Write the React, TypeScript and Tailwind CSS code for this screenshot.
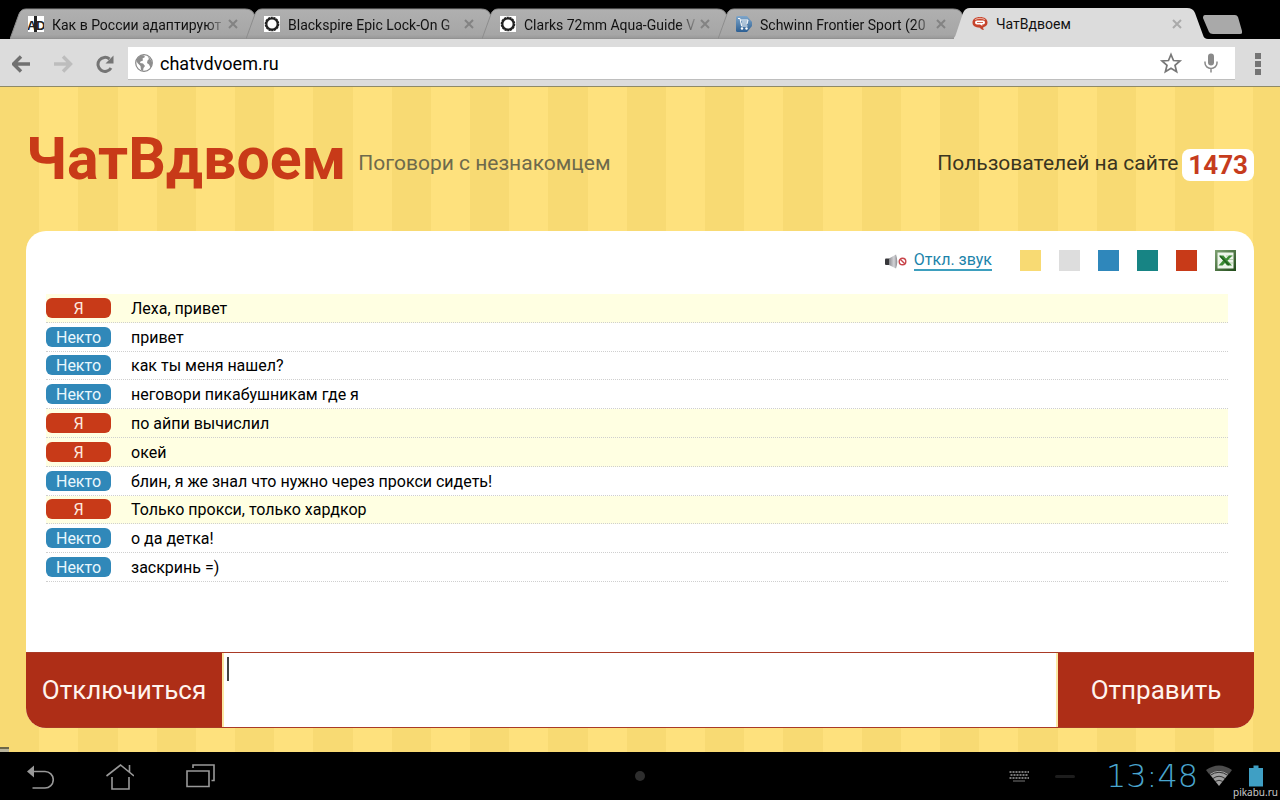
import React, { useState } from "react";
import { clsx } from "clsx";

interface TabInfo {
  id: string;
  title: string;
  icon: React.ReactNode;
}

interface Message {
  mine: boolean;
  text: string;
}

const MESSAGES: Message[] = [
  { mine: true,  text: "Леха, привет" },
  { mine: false, text: "привет" },
  { mine: false, text: "как ты меня нашел?" },
  { mine: false, text: "неговори пикабушникам где я" },
  { mine: true,  text: "по айпи вычислил" },
  { mine: true,  text: "окей" },
  { mine: false, text: "блин, я же знал что нужно через прокси сидеть!" },
  { mine: true,  text: "Только прокси, только хардкор" },
  { mine: false, text: "о да детка!" },
  { mine: false, text: "заскринь =)" },
];

const THEMES = [
  { name: "Жёлтая",  color: "bg-[#f8da73]" },
  { name: "Серая",   color: "bg-[#dddddd]" },
  { name: "Синяя",   color: "bg-[#2f87bb]" },
  { name: "Зелёная", color: "bg-[#178484]" },
  { name: "Красная", color: "bg-[#c83a18]" },
];

/* ---------- favicons ---------- */

const AdIcon = () => (
  <svg viewBox="0 0 16 16" className="h-4 w-4">
    <rect width="16" height="16" fill="#fff" />
    <rect x="6" width="3" height="16" fill="#222" />
    <text x="-1" y="14" fontFamily="Liberation Sans" fontWeight="700" fontSize="13" fill="#222">A</text>
    <text x="8" y="14" fontFamily="Liberation Sans" fontWeight="700" fontSize="13" fill="#222">D</text>
  </svg>
);

const GearIcon = () => (
  <svg viewBox="0 0 16 16" className="h-4 w-4">
    <rect width="16" height="16" fill="#fff" />
    <circle cx="8" cy="8" r="6.400" fill="none" stroke="#222" strokeWidth="1.800" strokeDasharray="2.200 0.600" />
    <circle cx="8" cy="8" r="5.600" fill="none" stroke="#222" strokeWidth="2" />
  </svg>
);

const CartIcon = () => (
  <svg viewBox="0 0 16 16" className="h-4 w-4">
    <defs>
      <linearGradient id="cart" x1="0" y1="0" x2="0" y2="1">
        <stop offset="0" stopColor="#7fa6ca" />
        <stop offset="1" stopColor="#2c5f93" />
      </linearGradient>
    </defs>
    <path d="M1.500 0h9.500L16 6v4l-5 6H1.500Q0 16 0 14.500v-13Q0 0 1.500 0z" fill="url(#cart)" />
    <path d="M2 2.500h2l1.500 7.500h6M4.500 4h7.500l-1 4H5M6 6h5" fill="none" stroke="#fff" strokeWidth="1" />
    <circle cx="6" cy="12.500" r="1.200" fill="#fff" />
    <circle cx="10.500" cy="12.500" r="1.200" fill="#fff" />
  </svg>
);

const BubbleIcon = () => (
  <svg viewBox="0 0 16 16" className="h-4 w-4">
    <path d="M8 1C3.500 1 0.500 3.200 0.500 6.500S3 11.500 8 11.800c1 1.400 2 2.400 4 2.200-.8-.8-.9-1.800-.7-2.700 2.800-.8 4.200-2.300 4.200-4.800C15.500 3.200 12.500 1 8 1z" fill="#c5432b" />
    <path d="M3 3.800C5 1.800 11 1.800 13 3.800" fill="none" stroke="#eba898" strokeWidth="1.200" />
    <path d="M5 4.500h6a2 2 0 0 1 0 4h-1l.5 1.500L8 8.500H5a2 2 0 0 1 0-4z" fill="#fff" />
    <path d="M5 6.500h6" stroke="#c5432b" strokeWidth="0.800" />
  </svg>
);

const TABS: TabInfo[] = [
  { id: "ad",         title: "Как в России адаптируют",    icon: <AdIcon /> },
  { id: "blackspire", title: "Blackspire Epic Lock-On G",  icon: <GearIcon /> },
  { id: "clarks",     title: "Clarks 72mm Aqua-Guide V",   icon: <GearIcon /> },
  { id: "schwinn",    title: "Schwinn Frontier Sport (20", icon: <CartIcon /> },
  { id: "chat",       title: "ЧатВдвоем",                  icon: <BubbleIcon /> },
];

/* ---------- browser chrome ---------- */

function Tab({ tab, active, onSelect }: { tab: TabInfo; active: boolean; onSelect: () => void }) {
  return (
    <div className="relative h-[31px] w-[236px] shrink-0">
      <svg viewBox="0 0 256 31" className="absolute left-0 top-0 h-[31px] w-64">
        <defs>
          <linearGradient id="idleTab" x1="0" y1="0" x2="0" y2="1">
            <stop offset="0" stopColor="#b0b0b0" />
            <stop offset="0.85" stopColor="#a6a6a6" />
            <stop offset="1" stopColor="#979797" />
          </linearGradient>
        </defs>
        {active ? (
          <path d="M-2 31Q1 30 2 26L9 5Q11 0 16 0H233Q239 0 241 5L249 27Q250 31 254 31z" fill="#dcdcdc" />
        ) : (
          <path d="M0 31L9 6Q11 1 16 1H235Q242 1 244 6L253 31z" fill="url(#idleTab)" stroke="#8d8d8d" strokeWidth="1" />
        )}
      </svg>
      <div className="relative flex h-full items-center pl-[18px] pr-[7px]">
        <button onClick={onSelect} className="flex min-w-0 flex-1 items-center gap-2 text-left">
          <span className="shrink-0">{tab.icon}</span>
          <span
            className={clsx(
              "block flex-1 overflow-hidden whitespace-nowrap text-[14px] leading-5 text-[#111]",
              !active && "pt-0.5 [mask-image:linear-gradient(to_right,#000_88%,transparent)]"
            )}
          >
            {tab.title}
          </span>
        </button>
        <button aria-label="Закрыть вкладку" className="flex h-5 w-3 shrink-0 items-center justify-center">
          <svg viewBox="0 0 10 10" className="h-2.5 w-2.5 overflow-visible">
            <path d="M1 1l8 8M9 1L1 9" stroke={active ? "#aaaaaa" : "#838383"} strokeWidth="2" />
          </svg>
        </button>
      </div>
    </div>
  );
}

function TabStrip() {
  const [active, setActive] = useState("chat");
  return (
    <div className="flex items-end overflow-hidden bg-black pl-2.5 pt-2">
      {TABS.map((t) => (
        <Tab key={t.id} tab={t} active={t.id === active} onSelect={() => setActive(t.id)} />
      ))}
      <button aria-label="Новая вкладка" className="mb-1 ml-3 h-5 w-10 shrink-0">
        <svg viewBox="0 0 40 20" className="h-5 w-10">
          <path d="M3 0H33Q35 0 36 2L40 16Q41 19 38 19H11Q8 19 7 17L1 3Q1 0 3 0z" fill="#a9a9a9" />
        </svg>
      </button>
    </div>
  );
}

function Toolbar() {
  const [url, setUrl] = useState("chatvdvoem.ru");
  return (
    <div className="flex h-12 items-center border-b border-[#8f8a66] bg-[#dcdcdc] pl-3 pr-[15px]">
      <button aria-label="Назад" className="mr-[22px] h-5 w-5">
        <svg viewBox="0 0 20 20" className="h-5 w-5">
          <path d="M18 11H3M9 3.500L1.500 11l7.500 7.500" fill="none" stroke="#707070" strokeWidth="3.400" />
        </svg>
      </button>
      <button aria-label="Вперёд" className="mr-[22px] h-5 w-5">
        <svg viewBox="0 0 20 20" className="h-5 w-5">
          <path d="M0 11H15M9 3.500L16.500 11l-7.500 7.500" fill="none" stroke="#bdbdbd" strokeWidth="3.400" />
        </svg>
      </button>
      <button aria-label="Обновить" className="mr-3 h-5 w-5">
        <svg viewBox="0 0 20 20" className="h-5 w-5">
          <path d="M15 15A7 7 0 1 1 13.500 6" fill="none" stroke="#757575" strokeWidth="3" />
          <path d="M17.500 2.500V10.500H9.500z" fill="#757575" />
        </svg>
      </button>
      <div className="flex h-8 flex-1 items-center bg-white pl-1.5 pr-3.5 shadow-[0_1px_0_#bebebe]">
        <svg viewBox="0 0 20 20" className="mr-1.5 h-5 w-5 shrink-0">
          <circle cx="10" cy="10" r="8.300" fill="#fff" stroke="#868686" strokeWidth="1.200" />
          <path d="M3 5.500L7 2l3 .5 1 1.500-2.500 1.500L9 7.500 6.500 8.500 6 10l3 .5 2 2.500-1.500 2L9 18 7 17l-.5-4L3.500 10 2.500 8z" fill="#8e8e8e" />
          <path d="M13.500 3.500l2.500 2L18 9v3l-1.500 2.500-1.500-3-2-1.500.5-2.500L15 6z" fill="#8e8e8e" />
        </svg>
        <input
          aria-label="Адрес"
          value={url}
          onChange={(e) => setUrl(e.target.value)}
          className="min-w-0 flex-1 bg-transparent pt-0.5 text-[18px] leading-6 text-black outline-none"
        />
        <button aria-label="В закладки" className="mr-5 h-5 w-5">
          <svg viewBox="0 0 20 20" className="h-5 w-5 overflow-visible">
            <path d="M10 1.500l2.500 6 6.500.5-5 4.300 1.600 6.400L10 15.300l-5.600 3.400L6 12.300 1 8l6.500-.5z" fill="none" stroke="#777" strokeWidth="1.700" />
          </svg>
        </button>
        <button aria-label="Голосовой поиск" className="h-5 w-5">
          <svg viewBox="0 0 20 20" className="h-5 w-5">
            <rect x="7" y="0.500" width="6" height="12" rx="3" fill="#8a8a8a" />
            <path d="M4 8.500v1.500a6 5.500 0 0 0 12 0V8.500M10 15.500V19.500" fill="none" stroke="#8a8a8a" strokeWidth="1.500" />
          </svg>
        </button>
      </div>
      <button aria-label="Меню" className="ml-4 flex w-3.5 flex-col items-center gap-0.5 pt-0.5">
        <span className="h-1.5 w-1.5 bg-[#757575]" />
        <span className="h-1.5 w-1.5 bg-[#757575]" />
        <span className="h-1.5 w-1.5 bg-[#757575]" />
      </button>
    </div>
  );
}

/* ---------- page ---------- */

function PageHeader() {
  return (
    <header className="flex items-center pb-8 pt-10">
      <h1 className="pb-2.5 pt-0.5 text-[59px] font-bold leading-[60px] text-[#c83a18]">ЧатВдвоем</h1>
      <p className="ml-3 text-[21px] leading-7 text-[#6e6a4c]">Поговори с незнакомцем</p>
      <p className="ml-auto text-[21px] leading-7 text-[#3a351f]">Пользователей на сайте</p>
      <span className="ml-1 mt-1 rounded-lg bg-white px-1.5 text-[26px] font-bold leading-8 text-[#c63c1d]">1473</span>
    </header>
  );
}

function ChatTools() {
  return (
    <div className="flex items-center justify-end pr-[18px] pt-[19px]">
      <svg viewBox="0 0 24 16" className="mr-1.5 h-4 w-6">
        <defs>
          <linearGradient id="cone" x1="0" y1="0" x2="1" y2="0">
            <stop offset="0" stopColor="#8b8b8f" />
            <stop offset="0.6" stopColor="#d4d4d8" />
            <stop offset="1" stopColor="#8c8c90" />
          </linearGradient>
        </defs>
        <rect x="1" y="5.500" width="5" height="6.500" rx="1" fill="#38383c" />
        <path d="M5 5.500L12 1.500Q14.500 8.500 12 15.500L5 12z" fill="url(#cone)" />
        <circle cx="18.500" cy="8.500" r="3.300" fill="#fff" stroke="#c8444a" strokeWidth="1.400" />
        <path d="M16.200 6.200l4.600 4.600" stroke="#c8444a" strokeWidth="1.400" />
      </svg>
      <a href="#sound" className="mr-7 border-b-2 border-[#3d9fbe] text-[16px] leading-[18px] text-[#1b83aa]">
        Откл. звук
      </a>
      <div className="flex gap-[18px]">
        {THEMES.map((t) => (
          <button key={t.name} aria-label={t.name} className={clsx("h-[21px] w-[21px]", t.color)} />
        ))}
        <button aria-label="Excel" className="h-[21px] w-[21px]">
          <svg viewBox="0 0 21 21" className="h-[21px] w-[21px]">
            <defs>
              <linearGradient id="xls" x1="0" y1="0" x2="1" y2="1">
                <stop offset="0" stopColor="#7fa374" />
                <stop offset="1" stopColor="#1f4a17" />
              </linearGradient>
            </defs>
            <rect width="21" height="21" fill="url(#xls)" />
            <rect x="2.500" y="2.500" width="16" height="16" fill="#edf5ea" />
            <path d="M11 6h7M12 9.500h6M12 13h6" stroke="#b3cfaa" />
            <path d="M4 5.500h4.500l2.500 3 3-3h3.500l-5 5 4.500 5H12l-2-2.500L7.500 15.500H3.500l4.500-5z" fill="#3b8c34" />
            <path d="M5 6l9 9" stroke="#1f5c1c" strokeWidth="1.500" />
          </svg>
        </button>
      </div>
    </div>
  );
}

function MessageRow({ message }: { message: Message }) {
  return (
    <li
      className={clsx(
        "flex items-center border-b border-dotted border-[#cfcfcf]",
        message.mine && "bg-[#ffffe2]"
      )}
    >
      <span
        className={clsx(
          "mr-5 h-5 w-[65px] rounded-md text-center text-[16px] leading-[22px]",
          message.mine ? "bg-[#c83a18] text-[#fde9df]" : "bg-[#3088b9] text-[#e9f7fd]"
        )}
      >
        {message.mine ? "Я" : "Некто"}
      </span>
      <span className="h-5 text-[16px] leading-[22px] text-black">{message.text}</span>
    </li>
  );
}

function Composer() {
  const [draft, setDraft] = useState("");
  return (
    <form className="mt-auto flex h-[76px] border-y border-[#a93a26]" onSubmit={(e) => e.preventDefault()}>
      <button type="button" className="w-[196px] bg-[#ae2e17] text-[26px] text-[#fff4ee]">
        Отключиться
      </button>
      <div className="relative flex-1 border-x-2 border-[#fbe9a4]">
        <textarea
          aria-label="Сообщение"
          value={draft}
          onChange={(e) => setDraft(e.target.value)}
          className="block h-full w-full resize-none bg-white p-1 text-[20px] outline-none"
        />
        {draft === "" && <span className="pointer-events-none absolute left-[3px] top-1 h-6 w-0.5 bg-[#444]" />}
      </div>
      <button type="submit" className="w-[196px] bg-[#ae2e17] text-[26px] text-[#fff4ee]">
        Отправить
      </button>
    </form>
  );
}

/* ---------- android system bar ---------- */

function SystemBar() {
  return (
    <footer className="relative grid h-12 grid-cols-[1fr_auto_1fr] items-center bg-black">
      <div className="flex items-center gap-[52px] pl-[26px]">
        <button aria-label="Назад" className="h-7 w-7">
          <svg viewBox="0 0 28 28" className="h-7 w-7">
            <path d="M6 9.500H19a8.200 8.200 0 0 1 0 16.500H6.500" fill="none" stroke="#999" strokeWidth="1.600" />
            <path d="M1 9.500L8 3.500V15.500z" fill="#999" />
          </svg>
        </button>
        <button aria-label="Домой" className="h-7 w-7">
          <svg viewBox="0 0 28 28" className="h-7 w-7">
            <path d="M0.500 14L14.500 3 28 14M23.500 3V10M6 15V27H23V15" fill="none" stroke="#999" strokeWidth="1.600" />
          </svg>
        </button>
        <button aria-label="Недавние" className="h-7 w-[30px]">
          <svg viewBox="0 0 30 28" className="h-7 w-[30px]">
            <path d="M1 9H23V24.500H1zM7 6V3H28V18.500H25.500" fill="none" stroke="#999" strokeWidth="1.600" />
          </svg>
        </button>
      </div>
      <span className="h-2.5 w-2.5 rounded-full bg-[#2e2e2e]" />
      <div className="flex items-center justify-end pr-[17px]">
        <svg viewBox="0 0 20 12" className="mr-[26px] h-3 w-5">
          <path d="M0.500 2H20M0.500 8H20" stroke="#777" strokeWidth="2" strokeDasharray="2 1" />
          <path d="M1.500 5H19" stroke="#777" strokeWidth="2" strokeDasharray="2 1" />
          <path d="M4 11H16" stroke="#777" strokeWidth="1" />
        </svg>
        <span className="mr-7 h-[3px] w-5 rounded-sm bg-[#1d1d1d]" />
        <time className="w-[98px] text-center font-['DejaVu_Sans_Light','DejaVu_Sans'] text-[32px] font-extralight leading-8 text-[#4aa6cf]">
          13:48
        </time>
        <svg viewBox="0 0 28 22" className="ml-1 h-[22px] w-7">
          <path d="M1 5Q14 -4 27 5L24 9Q14 2 4 9z" fill="#4c4c4c" />
          <path d="M4.500 9Q14 2.500 23.500 9L14 21z" fill="#a0a0a0" />
          <path d="M5 10.500Q14 4 23 10.500M8 13.500Q14 9 20 13.500M10 16.500Q14 14 18 16.500" fill="none" stroke="#333" strokeWidth="1" />
        </svg>
        <svg viewBox="0 0 14 22" className="ml-4 h-[22px] w-3.5">
          <path d="M4.500 0.500h5V3H14V21.500H0V3h4.500z" fill="#3f9fc4" />
        </svg>
      </div>
      <span className="absolute bottom-0 right-0.5 font-['Noto_Sans'] text-[10px] leading-4 text-[#c9c9c9]">pikabu.ru</span>
    </footer>
  );
}

export default function App() {
  return (
    <div className="flex min-h-screen flex-col bg-black font-[Roboto,sans-serif]">
      <TabStrip />
      <Toolbar />
      <main className="relative flex flex-1 flex-col bg-[repeating-linear-gradient(90deg,#f8da73_0_3.06%,#fee17d_3.06%_6.12%)] px-[26px] pb-6">
        <PageHeader />
        <section className="flex flex-1 flex-col overflow-hidden rounded-[20px] bg-white">
          <ChatTools />
          <ul className="mb-16 ml-5 mr-[26px] mt-[23px] grid h-72 auto-rows-fr">
            {MESSAGES.map((m) => (
              <MessageRow key={m.text} message={m} />
            ))}
          </ul>
          <Composer />
        </section>
        <span className="absolute bottom-0 left-0 h-[5px] w-[9px] border-t-2 border-[#6d6748] bg-[#b9b49c]" />
      </main>
      <SystemBar />
    </div>
  );
}
